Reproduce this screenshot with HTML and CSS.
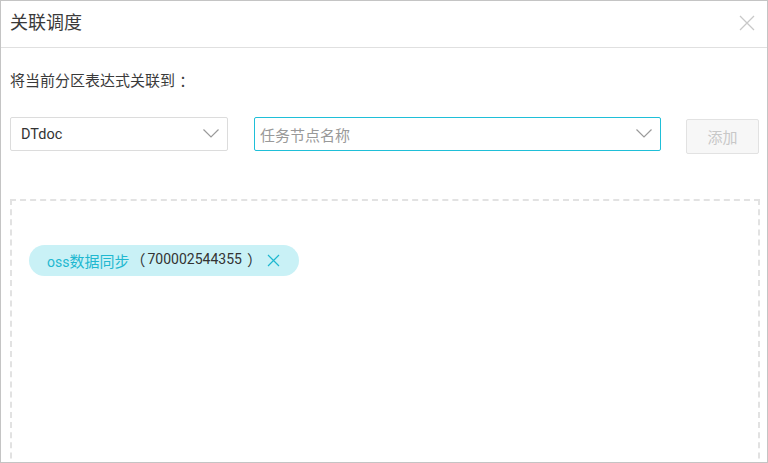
FILE: index.html
```html
<!DOCTYPE html>
<html lang="zh-CN">
<head>
<meta charset="utf-8">
<link rel="stylesheet" href="styles.css">
</head>
<body>
<div class="dialog">
  <div class="header">
    <span class="title">关联调度</span>
    <svg class="close" width="16" height="16" viewBox="0 0 16 16"><path d="M1 1L15 15M15 1L1 15" stroke="#c8c8c8" stroke-width="1.3" fill="none"/></svg>
  </div>
  <div class="content">
    <div class="label">将当前分区表达式关联到<span class="fw fw-c">：</span></div>
    <div class="row">
      <div class="select s1">
        <span class="value">DTdoc</span>
        <svg class="chev" width="16" height="9" viewBox="0 0 16 9"><path d="M0.5 0.5L8 8L15.5 0.5" stroke="#9a9a9a" stroke-width="1.2" fill="none"/></svg>
      </div>
      <div class="select s2">
        <span class="placeholder">任务节点名称</span>
        <svg class="chev" width="16" height="9" viewBox="0 0 16 9"><path d="M0.5 0.5L8 8L15.5 0.5" stroke="#9a9a9a" stroke-width="1.2" fill="none"/></svg>
      </div>
      <div class="btn">添加</div>
    </div>
    <div class="box">
      <div class="tag">
        <span class="tname">oss<span class="cjk">数据同步</span></span><span class="tid"><span class="fw fw-l">（</span>700002544355<span class="fw fw-r">）</span></span>
        <svg class="tclose" width="13" height="13" viewBox="0 0 13 13"><path d="M1 1L12 12M12 1L1 12" stroke="#1fb8d0" stroke-width="1.2" fill="none"/></svg>
      </div>
    </div>
  </div>
</div>
</body>
</html>
```

FILE: styles.css
```css
html, body {
  margin: 0;
  padding: 0;
  background: #fff;
}
body {
  font-family: Roboto, "Noto Sans CJK SC", sans-serif;
  color: #333;
}
.dialog {
  width: 768px;
  height: 463px;
  box-sizing: border-box;
  border: 1px solid #c4c4c4;
  overflow: hidden;
  background: #fff;
}
.header {
  height: 46px;
  border-bottom: 1px solid #e0e0e0;
  display: flex;
  align-items: center;
  justify-content: space-between;
  padding: 0 12px 0 9px;
}
.title {
  font-size: 18px;
  color: #3a3a3a;
  line-height: 22px;
  margin-top: -2px;
}
.close {
  display: block;
  margin-top: -3px;
}
.content {
  padding: 0 7px 0 9px;
}
.label {
  margin-top: 23px;
  height: 20px;
  font-size: 15px;
  line-height: 20px;
  color: #3a3a3a;
  overflow: hidden;
}
.fw {
  display: inline-block;
  width: 15px;
  font-size: 15px;
  line-height: 20px;
  vertical-align: top;
}
.fw-c {
  font-family: "Noto Sans CJK TC", sans-serif;
  text-align: center;
  width: 16px;
}
.fw-l {
  text-align: right;
  width: 16px;
  margin-right: 2px;
}
.fw-r {
  text-align: left;
  margin-left: 5px;
}
.row {
  margin-top: 26px;
  display: flex;
  align-items: flex-start;
  gap: 26px;
}
.select {
  height: 34px;
  box-sizing: border-box;
  border: 1px solid #dcdcdc;
  border-radius: 2px;
  display: flex;
  align-items: center;
  justify-content: space-between;
  padding: 0 8px 0 10px;
  font-size: 14.5px;
}
.s1 {
  width: 218px;
}
.s2 {
  width: 407px;
  border-color: #1fbfd8;
  padding-left: 5px;
  font-size: 15px;
}
.value {
  color: #333;
}
.placeholder {
  color: #999;
}
.chev {
  display: block;
  margin-top: -2px;
}
.btn {
  margin-top: 2px;
  margin-left: -1px;
  width: 73px;
  height: 35px;
  box-sizing: border-box;
  border: 1px solid #e2e2e2;
  border-radius: 2px;
  background: #f7f7f7;
  color: #c8c8c8;
  font-size: 15px;
  display: flex;
  align-items: center;
  justify-content: center;
}
.box {
  margin-top: 45px;
  width: 750px;
  height: 300px;
  box-sizing: border-box;
  border: 2px dashed #e2e2e2;
  padding: 44px 17px;
}
.tag {
  display: inline-flex;
  align-items: center;
  height: 31px;
  width: 270px;
  box-sizing: border-box;
  padding: 0 0 0 18px;
  background: #c9f1f6;
  border-radius: 16px;
  font-size: 14px;
}
.cjk {
  font-size: 15px;
}
.tname {
  color: #1fb8d0;
}
.tid {
  color: #333;
}
.tclose {
  display: block;
  margin-left: 5px;
}
```
